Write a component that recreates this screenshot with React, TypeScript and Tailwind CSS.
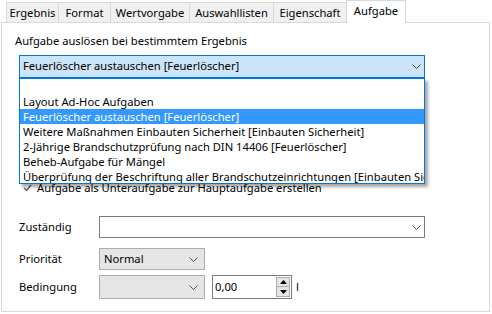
import React from "react";

const font = { fontFamily: '"Noto Sans", "Liberation Sans", sans-serif' };

const tabs = [
  { label: "Ergebnis", w: "w-[53px]" },
  { label: "Format", w: "w-[53px]" },
  { label: "Wertvorgabe", w: "w-[80px]" },
  { label: "Auswahllisten", w: "w-[85px]" },
  { label: "Eigenschaft", w: "w-[74px]" },
];

const items = [
  "",
  "Layout Ad-Hoc Aufgaben",
  "Feuerlöscher austauschen [Feuerlöscher]",
  "Weitere Maßnahmen Einbauten Sicherheit [Einbauten Sicherheit]",
  "2-Jährige Brandschutzprüfung nach DIN 14406 [Feuerlöscher]",
  "Beheb-Aufgabe für Mängel",
  "Überprüfung der Beschriftung aller Brandschutzeinrichtungen [Einbauten Sicherheit]",
];

function Chevron({ color = "#444" }: { color?: string }) {
  return (
    <svg width="9" height="5" viewBox="0 0 9 5" className="shrink-0">
      <path d="M0.5 0.5 L4.5 4.5 L8.5 0.5" fill="none" stroke={color} strokeWidth="1" />
    </svg>
  );
}

function Select({ value, width, height }: { value?: string; width: string; height: string }) {
  return (
    <div
      className={`${width} ${height} flex items-center justify-between border border-[#adadad] bg-[#e5e5e5] pl-[4px] pr-[6px]`}
    >
      <span>{value ?? ""}</span>
      <Chevron color="#555" />
    </div>
  );
}

export default function App() {
  return (
    <div className="relative h-[314px] w-[492px] overflow-hidden bg-white text-[11.2px] text-black" style={font}>
      {/* tab strip */}
      <div className="flex h-[22px] items-end pl-[6px]">
        {tabs.map((t) => (
          <div
            key={t.label}
            className={`${t.w} -mr-px flex h-[20px] items-center justify-center border border-b-0 border-[#d9d9d9] bg-[#f0f0f0] leading-none`}
          >
            {t.label}
          </div>
        ))}
        <div className="relative z-10 -mb-px flex h-[23px] w-[60px] items-start justify-center border border-b-0 border-[#d9d9d9] bg-white pt-[4px] leading-none">
          Aufgabe
        </div>
      </div>

      {/* panel */}
      <div className="ml-px flex h-[290px] w-[489px] flex-col border border-[#d9d9d9] bg-white">
        <div className="ml-[13px] mt-[10px] h-[15px] leading-[15px]">Aufgabe auslösen bei bestimmtem Ergebnis</div>

        <div className="relative z-20 ml-[17px] mt-[7px] h-[23px] w-[406px]">
          <div className="flex h-full items-center justify-between border border-[#0078d7] bg-[#cce4f7] pl-[3px] pr-[3px]">
            <span>Feuerlöscher austauschen [Feuerlöscher]</span>
            <Chevron />
          </div>
          <div className="absolute left-0 top-[23px] h-[106px] w-[406px] overflow-hidden border border-[#0078d7] bg-white shadow-[3px_3px_3px_rgba(0,0,0,0.35)]">
            {items.map((it, i) => (
              <div
                key={i}
                className={`h-[15px] whitespace-nowrap pl-[3px] leading-[15px] ${
                  i === 2 ? "bg-[#3399ff] text-white" : ""
                }`}
              >
                {it}
              </div>
            ))}
          </div>
        </div>

        <div className="ml-[19px] mt-[103px] flex h-[14px] items-center gap-[4px]">
          <div className="flex h-[13px] w-[12px] items-center justify-center">
            <svg width="9" height="8" viewBox="0 0 9 8">
              <path d="M1 4 L3.5 6.5 L8 1" fill="none" stroke="#555" strokeWidth="1.3" />
            </svg>
          </div>
          <span className="leading-[14px]">Aufgabe als Unteraufgabe zur Hauptaufgabe erstellen</span>
        </div>

        <div className="ml-[17px] mt-[21px] flex h-[22px] items-center">
          <span className="w-[80px]">Zuständig</span>
          <div className="flex h-[22px] w-[326px] items-center justify-end border border-[#7a7a7a] bg-white pr-[3px]">
            <Chevron color="#555" />
          </div>
        </div>

        <div className="ml-[17px] mt-[10px] flex h-[22px] items-center">
          <span className="w-[80px]">Priorität</span>
          <Select value="Normal" width="w-[106px]" height="h-[22px]" />
        </div>

        <div className="ml-[17px] mt-[5px] flex h-[24px] items-center">
          <span className="w-[80px]">Bedingung</span>
          <Select width="w-[106px]" height="h-[24px]" />
          <div className="ml-[7px] flex h-[24px] w-[80px] items-center justify-between border border-[#7a7a7a] bg-white pl-[2px] pr-px">
            <span>0,00</span>
            <div className="flex h-[20px] w-[14px] flex-col">
              <div className="flex h-[10px] items-center justify-center border border-[#adadad] bg-[#e5e5e5]">
                <svg width="7" height="4" viewBox="0 0 7 4">
                  <path d="M0 4 L3.5 0 L7 4 Z" fill="#000" />
                </svg>
              </div>
              <div className="flex h-[10px] items-center justify-center border border-t-0 border-[#adadad] bg-[#e5e5e5]">
                <svg width="7" height="4" viewBox="0 0 7 4">
                  <path d="M0 0 L3.5 4 L7 0 Z" fill="#000" />
                </svg>
              </div>
            </div>
          </div>
          <span className="ml-[4px]">l</span>
        </div>
      </div>
    </div>
  );
}
